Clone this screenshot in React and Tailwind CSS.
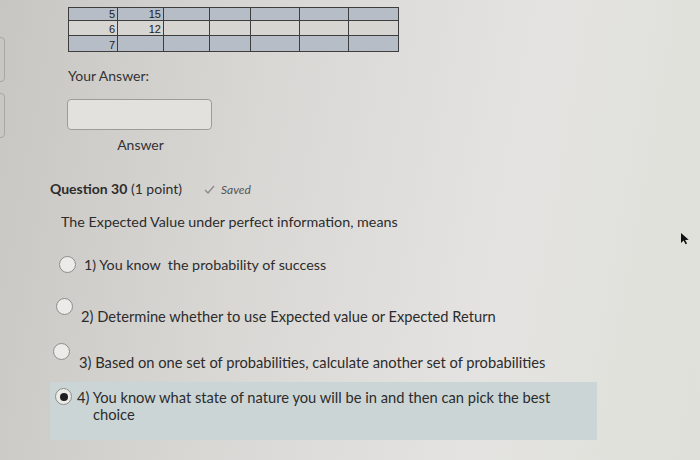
import React from "react";

const cols = [49, 46, 46, 41, 49, 49, 50];
const rows = [
  { a: "5", b: "15", shade: true, h: 13 },
  { a: "6", b: "12", shade: false, h: 15 },
  { a: "7", b: "", shade: true, h: 16 },
];

function Radio({ checked }) {
  return (
    <span className="flex h-[17px] w-[17px] shrink-0 items-center justify-center rounded-full border border-[#8c8c8c] bg-[#ecebe8]">
      {checked ? <span className="h-[8px] w-[8px] rounded-full bg-[#1f1f1f]" /> : null}
    </span>
  );
}

export default function App() {
  return (
    <div
      className="relative flex h-[460px] w-[700px] overflow-hidden bg-[linear-gradient(100deg,#c8c6c3_0%,#d9d7d4_35%,#e4e3e1_70%,#dfe0d9_100%)] text-[#2c2c2c] leading-[17px]"
      style={{ fontFamily: "Lato, 'Open Sans', sans-serif" }}
    >
      {/* clipped sidebar */}
      <div className="flex w-[5px] shrink-0 flex-col gap-[11px] pt-[37px]">
        <div className="-ml-[8px] h-[45px] w-[13px] rounded-[4px] border border-[#a9a7a4]" />
        <div className="-ml-[8px] h-[45px] w-[13px] rounded-[4px] border border-[#a9a7a4]" />
      </div>

      <div className="flex flex-1 flex-col pl-[45px]">
        <div className="pl-[18px] pt-[7px]">
          <table
            className="border-collapse text-[11px] leading-none text-[#222]"
            style={{ fontFamily: "'Liberation Sans', Arial, sans-serif" }}
          >
            <tbody>
              {rows.map((r, i) => (
                <tr key={i} className={r.shade ? "bg-[#b7bdc6]" : "bg-[#d6d5d2]"}>
                  {cols.map((w, j) => (
                    <td
                      key={j}
                      className="border border-[#3d3d3d] px-[2px] text-right align-bottom"
                      style={{ width: w, height: r.h }}
                    >
                      {j === 0 ? r.a : j === 1 ? r.b : ""}
                    </td>
                  ))}
                </tr>
              ))}
            </tbody>
          </table>

          <div className="mt-[15px] text-[14px] text-[#333]">Your Answer:</div>

          <div className="mt-[15px] h-[31px] w-[145px] -ml-[1px] rounded-[4px] border border-[#9d9c99] bg-[#e2e1de]" />

          <div className="mt-[6px] w-[145px] text-center text-[14px] text-[#333]">Answer</div>
        </div>

        <div className="mt-[27px] flex items-baseline gap-[22px]">
          <div className="text-[14px]">
            <span className="font-bold">Question 30</span> (1 point)
          </div>
          <div className="flex items-center gap-[6px] text-[12px] italic text-[#555]">
            <svg width="11" height="9" viewBox="0 0 11 9" fill="none">
              <path d="M1 5l3 3 6-7" stroke="#8a8a8a" strokeWidth="1.3" />
            </svg>
            Saved
          </div>
        </div>

        <div className="mt-[15px] pl-[11px] text-[14.3px]">
          The Expected Value under perfect information, means
        </div>

        <div className="mt-[26px] flex items-center gap-[8px] pl-[9px] text-[14.3px]">
          <Radio />
          <span>1) You know&nbsp; the probability of success</span>
        </div>

        <div className="mt-[25px] flex items-start gap-[8px] pl-[6px] text-[14.7px]">
          <Radio />
          <span className="pt-[10px]">2) Determine whether to use Expected value or Expected Return</span>
        </div>

        <div className="mt-[18px] flex items-start gap-[9px] pl-[3px] text-[14.7px]">
          <Radio />
          <span className="pt-[11px]">3) Based on one set of probabilities, calculate another set of probabilities</span>
        </div>

        <div className="mt-[11px] flex w-[547px] items-start gap-[5px] bg-[#cbd5d5] pb-[17px] pl-[5px] pt-[6px] text-[14.7px] leading-[17px]">
          <Radio checked />
          <div className="flex flex-col pt-[1px]">
            <span>4) You know what state of nature you will be in and then can pick the best</span>
            <span className="pl-[16px]">choice</span>
          </div>
        </div>
      </div>

      {/* mouse cursor */}
      <svg className="absolute left-[680px] top-[232px]" width="10" height="13" viewBox="0 0 10 13">
        <path d="M1 1l0 10 2.6-2.4 2 3.6 1.5-.8-2-3.4 3.6-.3z" fill="#111" />
      </svg>
    </div>
  );
}
